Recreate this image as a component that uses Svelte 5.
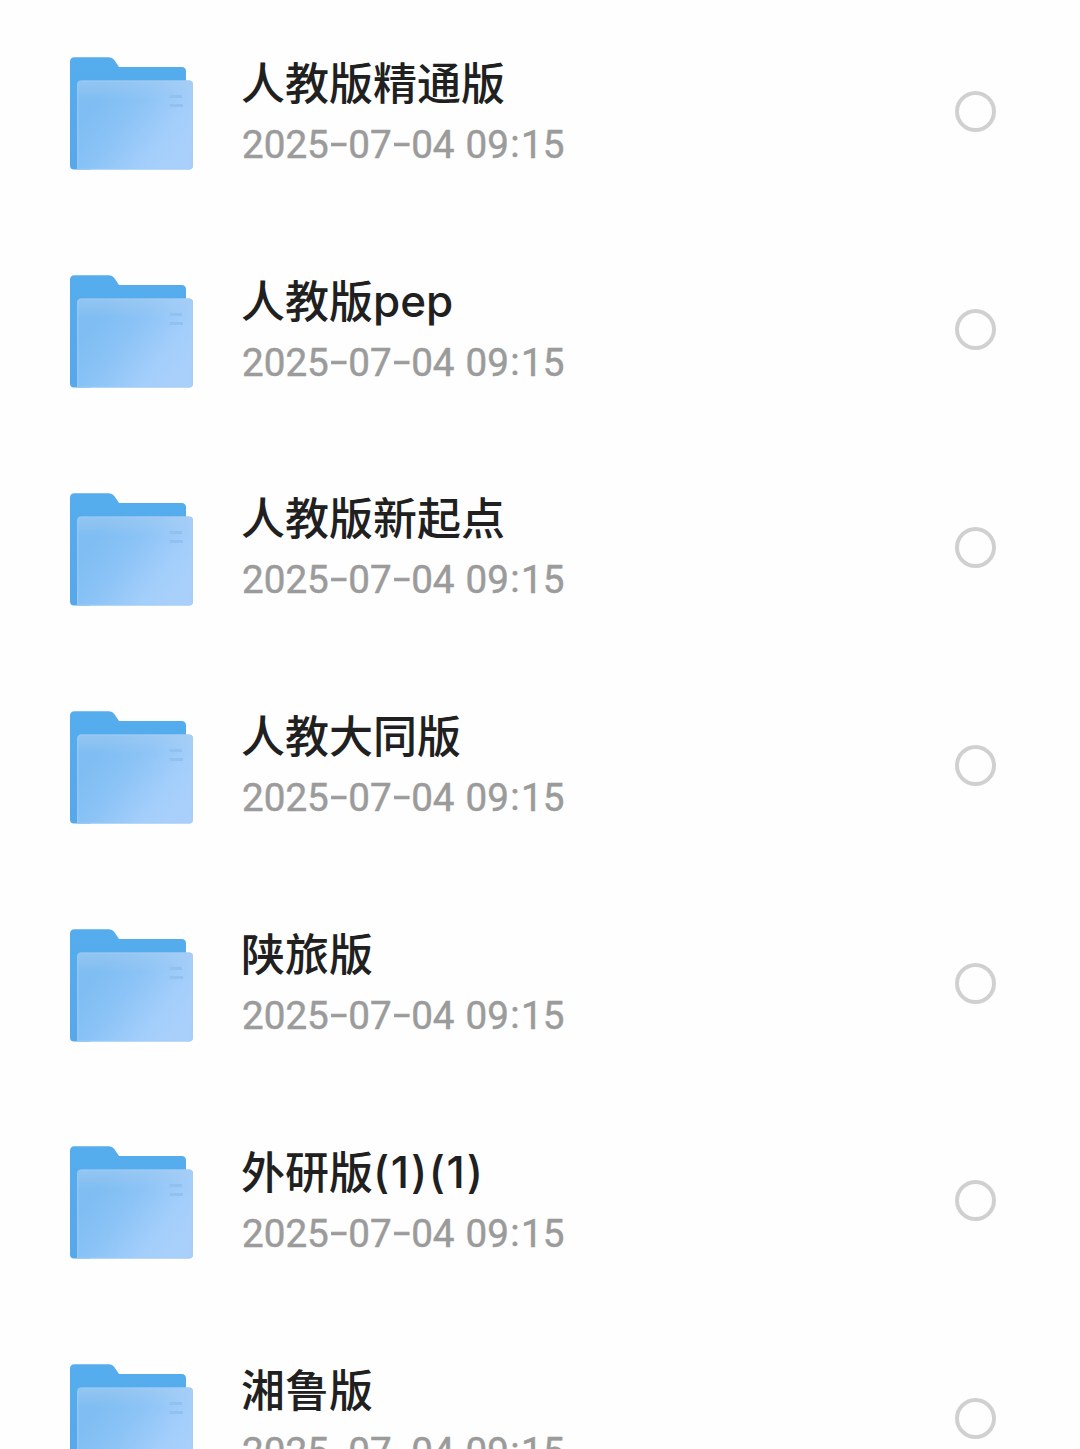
<script>
  const date = '2025-07-04 09:15';
  const folders = [
    ['人教版精通版', ''],
    ['人教版', 'pep'],
    ['人教版新起点', ''],
    ['人教大同版', ''],
    ['陕旅版', ''],
    ['外研版', '(1)(1)'],
    ['湘鲁版', '']
  ].map(([name, suffix]) => ({ name, suffix, date }));
  let selected = $state(folders.map(() => false));
</script>

<svg class="defs" width="0" height="0" aria-hidden="true">
  <defs>
    <linearGradient id="back" x1="0" y1="0" x2="0" y2="1">
      <stop offset="0" stop-color="#55adee" />
      <stop offset="1" stop-color="#56a8e9" />
    </linearGradient>
    <linearGradient id="front" gradientUnits="userSpaceOnUse" x1="25" y1="45" x2="105" y2="105">
      <stop offset="0" stop-color="#7fbdf2" />
      <stop offset="0.35" stop-color="#8bc3f6" />
      <stop offset="0.75" stop-color="#a3cefb" />
      <stop offset="1" stop-color="#a9d0fb" />
    </linearGradient>
    <linearGradient id="sheen" x1="0" y1="0" x2="0" y2="1">
      <stop offset="0" stop-color="#b4d2f0" stop-opacity="0.4" />
      <stop offset="0.22" stop-color="#b4d2f0" stop-opacity="0" />
    </linearGradient>
    <linearGradient id="edge" x1="0" y1="0" x2="1" y2="0">
      <stop offset="0" stop-color="#96caf6" />
      <stop offset="1" stop-color="#a8cdf3" />
    </linearGradient>
  </defs>
</svg>

<main class="list">
  {#each folders as folder, i}
    <div class="row">
      <svg class="folder" viewBox="0 0 124 114" aria-hidden="true">
        <path fill="url(#back)" d="M0 4.7Q0 0.2 4.5 0.2H39Q42.5 0.2 44.3 3L48.7 9.5Q49 10 50 10H111.5Q116 10 116 14.5V60L20 112.5H4Q0 112.5 0 108.5Z" />
        <path fill="url(#front)" d="M7.3 27.5Q7.3 23.5 11.5 23.5H119Q123 23.5 123 27.5V108.5Q123 112.5 119 112.5H7.3Z" />
        <path fill="url(#sheen)" stroke="url(#edge)" stroke-width="1.2" d="M7.7 28Q7.7 24 11.5 24H119Q122.4 24 122.4 28V108.5Q122.4 112 119 112H7.7Z" />
        <path class="mark" d="M99.5 39.5H112M99.5 48.5H113" />
      </svg>
      <div class="info">
        <div class="name">{folder.name}{#if folder.suffix}<span class:numbered={folder.suffix.includes('(')} class="suffix">{folder.suffix}</span>{/if}</div>
        <div class="date">{#each folder.date.split('') as c}{#if c === '-'}<span class="dash">-</span>{:else if c === ':'}<span class="colon">:</span>{:else}{c}{/if}{/each}</div>
      </div>
      <button
        class="radio"
        class:on={selected[i]}
        aria-label={folder.name + folder.suffix}
        onclick={() => (selected[i] = !selected[i])}
      ></button>
    </div>
  {/each}
</main>

<style>
  :global(body) {
    margin: 0;
    background: #fefefe;
  }
  .defs {
    display: block;
  }
  .list {
    width: 1080px;
    height: 1449px;
    overflow: hidden;
    box-sizing: border-box;
    padding-top: 3px;
  }
  .row {
    display: flex;
    align-items: center;
    height: 217.8px;
    box-sizing: border-box;
    padding: 0 84px 0 70px;
  }
  .folder {
    width: 124px;
    height: 114px;
    flex: none;
    margin-top: 5px;
  }
  .mark {
    fill: none;
    stroke: #8fbdeb;
    stroke-width: 2.8;
    opacity: 0.75;
  }
  .info {
    flex: 1;
    margin-left: 47px;
    padding-top: 5px;
    white-space: nowrap;
  }
  .name {
    height: 61px;
    line-height: 62px;
    font-family: Inter, 'Noto Sans CJK SC', sans-serif;
    font-size: 44px;
    font-weight: 500;
    color: #202020;
  }
  .suffix {
    display: inline-block;
    line-height: 1;
    vertical-align: 1px;
  }
  .numbered {
    letter-spacing: 1.6px;
  }
  .date {
    height: 62px;
    padding-left: 1px;
    line-height: 62px;
    font-family: Roboto, sans-serif;
    font-size: 38.6px;
    font-weight: 400;
    color: #9b9b9b;
    word-spacing: 1.5px;
    -webkit-text-stroke: 0.5px #9b9b9b;
  }
  .dash {
    display: inline-block;
    width: 19.5px;
    text-align: center;
    transform: translateY(-2px) scaleX(1.6);
  }
  .colon {
    display: inline-block;
    width: 12px;
    text-align: center;
    transform: translateY(-1px);
  }
  .radio {
    flex: none;
    width: 41px;
    height: 41px;
    box-sizing: border-box;
    padding: 0;
    border: 4px solid #d0d0d0;
    border-radius: 50%;
    background: transparent;
  }
  .radio.on {
    border-color: #55adee;
    background: #55adee;
  }
</style>
